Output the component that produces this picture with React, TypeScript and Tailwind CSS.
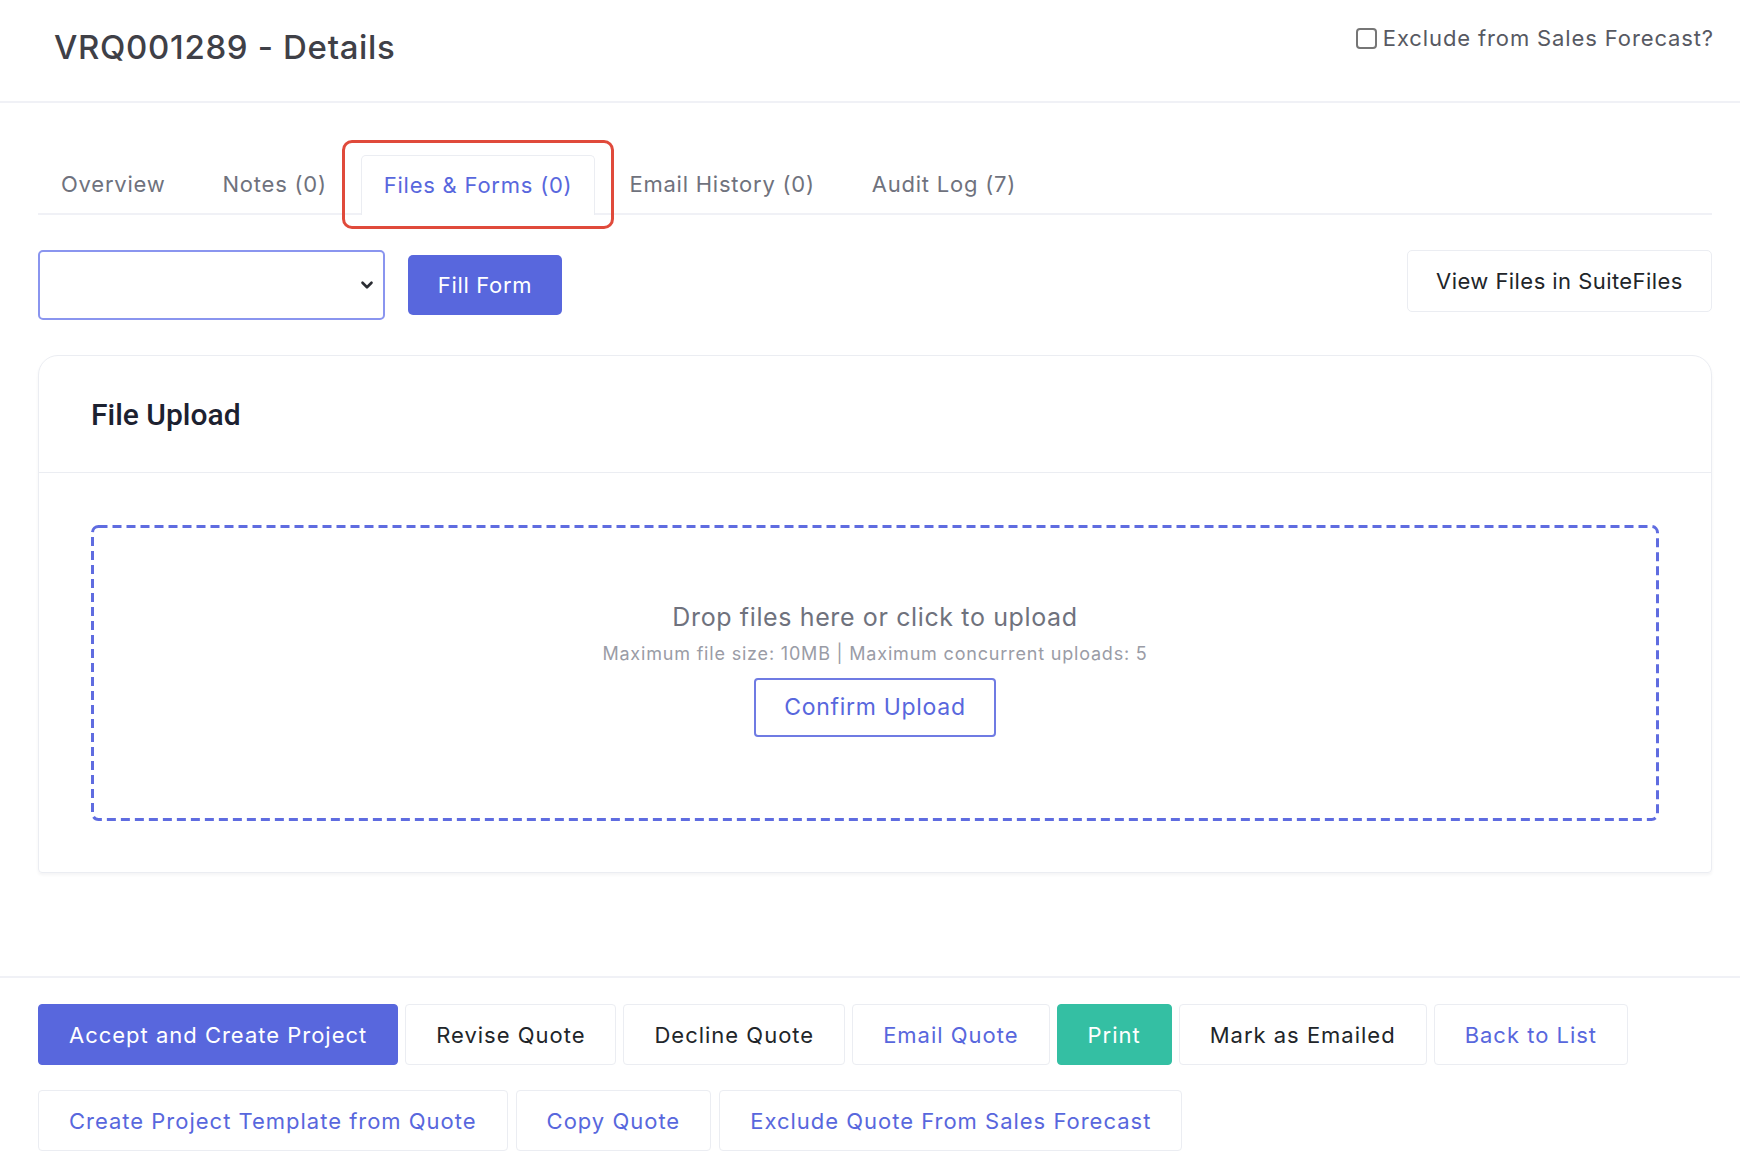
import React from "react";
import { ChevronDown } from "lucide-react";

const tabs = [
  { label: "Overview", active: false },
  { label: "Notes (0)", active: false },
  { label: "Files & Forms (0)", active: true },
  { label: "Email History (0)", active: false },
  { label: "Audit Log (7)", active: false },
];

type Btn = { label: string; kind: "primary" | "success" | "dark" | "link" };

const row1: Btn[] = [
  { label: "Accept and Create Project", kind: "primary" },
  { label: "Revise Quote", kind: "dark" },
  { label: "Decline Quote", kind: "dark" },
  { label: "Email Quote", kind: "link" },
  { label: "Print", kind: "success" },
  { label: "Mark as Emailed", kind: "dark" },
  { label: "Back to List", kind: "link" },
];

const row2: Btn[] = [
  { label: "Create Project Template from Quote", kind: "link" },
  { label: "Copy Quote", kind: "link" },
  { label: "Exclude Quote From Sales Forecast", kind: "link" },
];

function ActionButton({ b }: { b: Btn }) {
  const cls =
    b.kind === "primary"
      ? "bg-[#5867dd] border-[#5867dd] text-white"
      : b.kind === "success"
      ? "bg-[#34bfa3] border-[#34bfa3] text-white"
      : b.kind === "dark"
      ? "bg-white border-[#ebedf2] text-[#212529]"
      : "bg-white border-[#ebedf2] text-[#5867dd]";
  return (
    <button
      className={`h-[61px] px-[30px] rounded-[4px] border text-[22px] tracking-[0.045em] leading-none whitespace-nowrap ${cls}`}
    >
      {b.label}
    </button>
  );
}

export default function App() {
  return (
    <div className="min-h-[1176px] bg-white font-['Inter',sans-serif] text-[#575962]">
      {/* Header */}
      <header className="h-[103px] border-b-2 border-[#f0f1f6] flex items-start justify-between pl-[54px] pr-[26px]">
        <h1 className="pt-[27px] text-[33px] tracking-[0.02em] leading-[40px] font-medium text-[#3f4047]">
          VRQ001289 - Details
        </h1>
        <label className="pt-[24px] flex items-center gap-[6px] text-[22px] tracking-[0.04em] leading-[28px] text-[#575962]">
          <span className="inline-block w-[21px] h-[21px] rounded-[4px] border-2 border-[#767676] bg-white" />
          Exclude from Sales Forecast?
        </label>
      </header>

      <main className="pl-[38px] pr-[28px]">
        {/* Tabs */}
        <div className="relative mt-[52px]">
          <div className="flex gap-[11px] border-b-2 border-[#f0f1f6] h-[60px]">
            {tabs.map((t) => (
              <div
                key={t.label}
                className={
                  t.active
                    ? "px-[22px] h-[60px] -mb-[2px] flex items-center border border-b-0 border-[#ebedf2] rounded-t-[5px] bg-white text-[22px] tracking-[0.035em] text-[#5867dd]"
                    : "px-[23px] h-[58px] flex items-center text-[22px] tracking-[0.035em] text-[#6f727d]"
                }
              >
                {t.label}
              </div>
            ))}
          </div>
          <div className="absolute left-[304px] -top-[15px] w-[272px] h-[89px] border-[3px] border-[#e04a3b] rounded-[10px] pointer-events-none" />
        </div>

        {/* Controls */}
        <div className="mt-[35px] flex items-start">
          <div className="w-[347px] h-[70px] rounded-[5px] border-2 border-[#8a95ef] flex items-center justify-end pr-[7px]">
            <ChevronDown size={18} strokeWidth={3.5} className="text-[#2b2d33]" />
          </div>
          <button className="ml-[23px] mt-[5px] w-[154px] h-[60px] rounded-[5px] bg-[#5867dd] text-white text-[22px] tracking-[0.03em]">
            Fill Form
          </button>
          <button className="ml-auto w-[305px] h-[62px] rounded-[5px] border border-[#ebedf2] bg-white text-[22px] tracking-[0.02em] text-[#212529]">
            View Files in SuiteFiles
          </button>
        </div>

        {/* Card */}
        <section className="mt-[35px] h-[518px] rounded-t-[20px] rounded-b-[4px] border border-[#ebedf2] shadow-[0_2px_3px_rgba(69,65,78,0.06)] flex flex-col">
          <div className="h-[117px] border-b border-[#ebedf2] flex items-center pl-[52px]">
            <h2 className="font-['Roboto',sans-serif] font-medium text-[30px] text-[#1c2130]">
              File Upload
            </h2>
          </div>
          <div className="px-[52px] pt-[52px]">
            <div className="relative h-[296px] pb-[7px] flex flex-col items-center justify-center">
              <svg
                className="absolute inset-0 w-full h-full pointer-events-none"
                viewBox="0 0 1568 296"
                preserveAspectRatio="none"
              >
                <rect
                  x="1.5"
                  y="1.5"
                  width="1565"
                  height="293"
                  rx="6"
                  fill="none"
                  stroke="#5f6ce0"
                  strokeWidth="3"
                  strokeDasharray="9 5"
                />
              </svg>
              <div className="text-[25px] tracking-[0.025em] leading-[30px] text-[#6f727d]">
                Drop files here or click to upload
              </div>
              <div className="mt-[11px] text-[18px] tracking-[0.045em] leading-[22px] text-[#9a9ca6]">
                Maximum file size: 10MB | Maximum concurrent uploads: 5
              </div>
              <button className="mt-[13px] w-[242px] h-[59px] rounded-[4px] border-2 border-[#6f7be3] bg-white text-[23px] tracking-[0.03em] text-[#5867dd]">
                Confirm Upload
              </button>
            </div>
          </div>
        </section>
      </main>

      {/* Footer actions */}
      <footer className="mt-[103px] border-t-2 border-[#f0f1f6] pl-[38px] pr-[28px] pt-[26px]">
        <div className="flex gap-[7px]">
          {row1.map((b) => (
            <ActionButton key={b.label} b={b} />
          ))}
        </div>
        <div className="mt-[25px] flex gap-[8px]">
          {row2.map((b) => (
            <ActionButton key={b.label} b={b} />
          ))}
        </div>
      </footer>
    </div>
  );
}
